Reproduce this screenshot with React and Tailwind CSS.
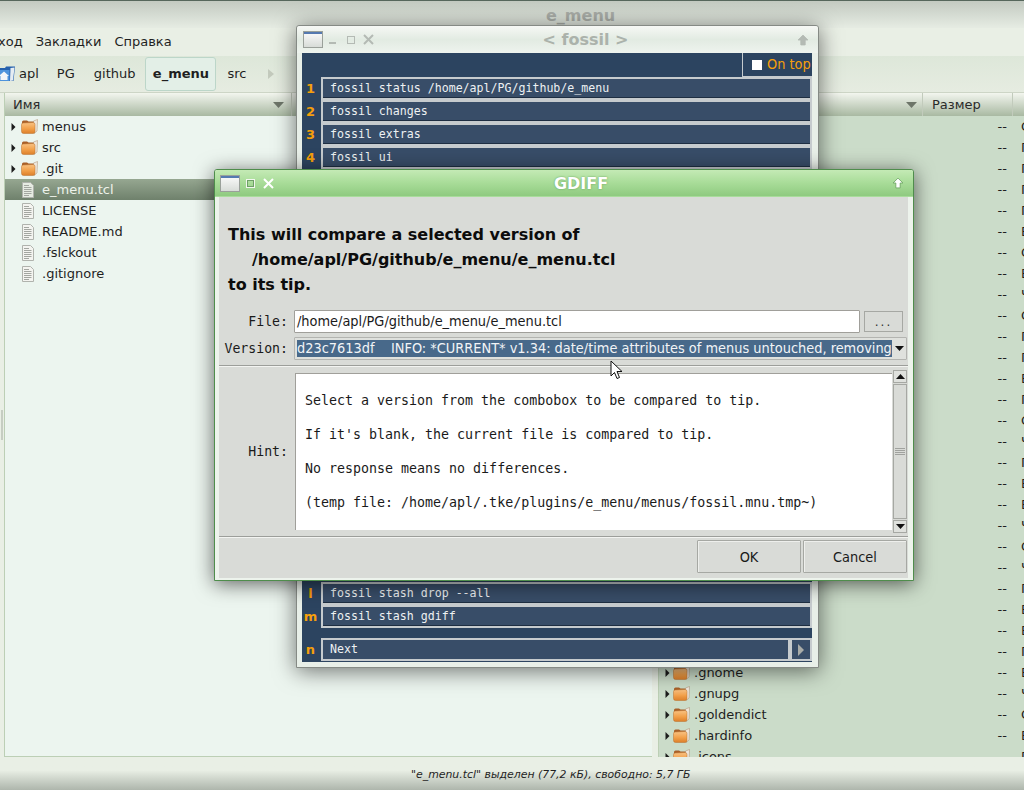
import React from 'react'

const leftRows = [
  { name: 'menus', dir: true },
  { name: 'src', dir: true },
  { name: '.git', dir: true },
  { name: 'e_menu.tcl', selected: true },
  { name: 'LICENSE' },
  { name: 'README.md' },
  { name: '.fslckout' },
  { name: '.gitignore' },
]

const dayLetters = 'СППППВСВЧСППВПСЧПВВЧСЧПВВПВЧСВП'.split('')
const rightNames = { 26: '.gnome', 27: '.gnupg', 28: '.goldendict', 29: '.hardinfo', 30: '.icons' }

function FolderIcon() {
  return (
    <svg width="17" height="15" viewBox="0 0 17 15" className="shrink-0">
      <defs>
        <linearGradient id="folderFront" x1="0" y1="0" x2="0" y2="1">
          <stop offset="0" stopColor="#f9c384" />
          <stop offset="0.55" stopColor="#f2a04a" />
          <stop offset="1" stopColor="#dc7f2a" />
        </linearGradient>
      </defs>
      <path d="M1 3 Q1 1.5 2.5 1.5 L6 1.5 L7.5 2.5 L14 2.5 L14 12 L1 12 Z" fill="#a85f28" />
      <path d="M12.5 2 L16.5 0.5 L16 12 L13 14.5 Z" fill="#efe9df" stroke="#a8896a" strokeWidth="0.5" />
      <path d="M0.5 5.5 Q0.5 4 2 4 L12 3.5 Q14 3.5 14 5.5 L14 12.5 Q14 14.5 12 14.5 L2.5 14.5 Q0.5 14.5 0.5 12.5 Z" fill="url(#folderFront)" stroke="#b8712f" strokeWidth="0.5" />
    </svg>
  )
}

function FileIcon({ selected }) {
  return (
    <svg width="14" height="16" viewBox="0 0 14 16" className="shrink-0">
      <path d="M1.5 0.5 H9.5 L12.5 3.5 V15.5 H1.5 Z" fill={selected ? '#e6ebe2' : '#f4f4f0'} stroke="#b0b3ad" />
      <path d="M3 3.5 H8 M3 5.5 H10.5 M3 7.5 H10.5 M3 9.5 H10.5 M3 11.5 H10.5 M3 13.5 H8" stroke="#a3a6a0" strokeWidth="1" />
    </svg>
  )
}

function Expander() {
  return (
    <svg width="5" height="8" viewBox="0 0 5 8" className="shrink-0">
      <path d="M0.5 0 L4.5 4 L0.5 8 Z" fill="#1c1c1c" />
    </svg>
  )
}

function SortArrow() {
  return (
    <svg width="11" height="6" viewBox="0 0 11 6">
      <path d="M0 0 H11 L5.5 6 Z" fill="#6d7569" />
    </svg>
  )
}

function WindowIcon() {
  return (
    <div className="w-[20px] h-[17px] border border-[#9aa09a] bg-gradient-to-b from-[#fbfbfb] to-[#d8dcd8] shrink-0">
      <div className="h-[2px] bg-[#5579b0]" />
    </div>
  )
}

function ArrowUp({ color, stroke }) {
  return (
    <svg width="12" height="12" viewBox="0 0 11 11">
      <path d="M5.5 1 L10 5.5 H7.5 V10 H3.5 V5.5 H1 Z" fill={color} stroke={stroke} strokeWidth="0.8" />
    </svg>
  )
}

function FossilRow({ label, text }) {
  return (
    <div className="flex h-[23px]">
      <div className="w-[19px] pr-[2px] flex items-center justify-center font-bold text-[13px] text-[#f59f0b]">{label}</div>
      <div className="flex-1 flex items-center pl-[7px] pt-[1px] border-2 border-[#c6cbce] bg-[#384d68] text-[#eef1f3] shadow-[inset_0_-1px_0_#1e2e42] font-['DejaVu_Sans_Mono',monospace] text-[11.6px]">
        {text}
      </div>
    </div>
  )
}

function FossilWindow() {
  return (
    <div className="absolute left-[296px] top-[25px] w-[523px] h-[643px] flex flex-col border border-[#858a85] rounded-t-[3px] bg-[#e8efe8] shadow-[0_3px_22px_rgba(0,0,0,0.55)]">
      <div className="h-[27px] shrink-0 flex items-center pl-[6px] pr-[9px] relative rounded-t-[3px] bg-gradient-to-b from-[#f6f8f5] via-[#e2ebe2] to-[#eef3ee]">
        <WindowIcon />
        <div className="ml-[6px] w-[7px] h-[2px] mt-[6px] bg-[#b4bab4]" />
        <div className="ml-[11px] w-[8px] h-[8px] border border-[#b4bab4]" />
        <svg width="11" height="11" viewBox="0 0 11 11" className="ml-[8px]">
          <path d="M1 1 L10 10 M10 1 L1 10" stroke="#b4bab4" strokeWidth="2" />
        </svg>
        <div className="flex-1 text-center font-bold text-[16px] text-[#abb2ab]">&lt; fossil &gt;</div>
        <ArrowUp color="#b4bab4" stroke="#b4bab4" />
      </div>
      <div className="flex-1 ml-[5px] mr-[6px] mb-[5px] flex flex-col bg-[#2c4460]">
        <div className="h-[24px] flex justify-end">
          <div className="w-[70px] flex items-center pl-[9px] gap-[5px] border-l border-b border-[#c6cbce] font-['DejaVu_Sans_Condensed','DejaVu_Sans',sans-serif] text-[14.4px] text-[#f59f0b]">
            <div className="w-[10px] h-[10px] bg-white shrink-0" />
            <span className="whitespace-nowrap">On top</span>
          </div>
        </div>
        <FossilRow label="1" text="fossil status /home/apl/PG/github/e_menu" />
        <FossilRow label="2" text="fossil changes" />
        <FossilRow label="3" text="fossil extras" />
        <FossilRow label="4" text="fossil ui" />
        <div className="flex-1" />
        <FossilRow label="l" text="fossil stash drop --all" />
        <FossilRow label="m" text="fossil stash gdiff" />
        <div className="h-[10px]" />
        <div className="flex h-[23px] mb-[1px]">
          <div className="w-[19px] pr-[2px] flex items-center justify-center font-bold text-[13px] text-[#f59f0b]">n</div>
          <div className="flex-1 flex items-center pl-[7px] pt-[1px] border-2 border-[#c6cbce] bg-[#384d68] text-[#eef1f3] font-['DejaVu_Sans_Mono',monospace] text-[11.6px]">
            Next
          </div>
          <div className="w-[22px] flex items-center justify-center border-2 border-[#c6cbce] bg-[#384d68]">
            <svg width="6" height="12" viewBox="0 0 6 12">
              <path d="M0 0 L6 6 L0 12 Z" fill="#a9aca8" />
            </svg>
          </div>
        </div>
      </div>
    </div>
  )
}

function Separator() {
  return <div className="h-[2px] shrink-0 border-t border-[#9c9e9a] bg-[#f3f4f1]" />
}

function DialogButton({ children }) {
  return (
    <div className="w-[104px] h-[33px] flex items-center justify-center pt-[2px] border border-[#a6a8a3] rounded-[1px] bg-[#d9dbd7] shadow-[inset_1px_1px_0_#eeefec] font-['DejaVu_Sans_Condensed','DejaVu_Sans',sans-serif] text-[14.4px] text-[#1a1a1a]">
      {children}
    </div>
  )
}

function Scrollbar() {
  return (
    <div className="w-[14px] h-[163px] flex flex-col gap-[1px] mt-[3px] shrink-0">
      <div className="h-[13px] flex items-center justify-center border border-[#a6a8a3] bg-[#dfe1dd]">
        <svg width="9" height="5" viewBox="0 0 9 5"><path d="M4.5 0 L9 5 H0 Z" fill="#111" /></svg>
      </div>
      <div className="flex-1 flex flex-col items-center justify-center gap-[1px] border border-[#a6a8a3] bg-[#d9dbd7]">
        <div className="w-[10px] h-[1px] bg-[#a0a29e]" />
        <div className="w-[10px] h-[1px] bg-[#a0a29e]" />
        <div className="w-[10px] h-[1px] bg-[#a0a29e]" />
        <div className="w-[10px] h-[1px] bg-[#a0a29e]" />
      </div>
      <div className="h-[13px] flex items-center justify-center border border-[#a6a8a3] bg-[#dfe1dd]">
        <svg width="9" height="5" viewBox="0 0 9 5"><path d="M0 0 H9 L4.5 5 Z" fill="#111" /></svg>
      </div>
    </div>
  )
}

function GdiffDialog() {
  const mono = "font-['DejaVu_Sans_Mono',monospace] text-[13.2px] text-[#1a1a1a]"
  const condensed = "font-['DejaVu_Sans_Condensed','DejaVu_Sans',sans-serif] text-[14.4px]"
  return (
    <div className="absolute left-[214px] top-[169px] w-[700px] h-[412px] flex flex-col border border-[#4f8d4c] rounded-t-[3px] bg-[#edf3ec] shadow-[0_3px_20px_rgba(0,0,0,0.6)]">
      <div className="h-[27px] shrink-0 flex items-center pl-[5px] pr-[9px] rounded-t-[2px] border-b border-[#a9dc9c] bg-gradient-to-b from-[#c4eab5] via-[#a8dc98] to-[#8fca80]">
        <WindowIcon />
        <div className="ml-[6px] w-[9px] h-[9px] border border-[#f2f7ef] shadow-[inset_0_0_0_1px_#6f9f68]" />
        <svg width="11" height="11" viewBox="0 0 11 11" className="ml-[8px]">
          <path d="M1 1 L10 10 M10 1 L1 10" stroke="#ffffff" strokeWidth="2" />
        </svg>
        <div className="flex-1 text-center pt-[1px] font-bold text-[16px] text-white [text-shadow:0_0_2px_#5e9c55] pr-[4px]">GDIFF</div>
        <ArrowUp color="#ffffff" stroke="#6ea564" />
      </div>
      <div className="flex-1 ml-[4px] mr-[5px] mb-[2px] flex flex-col bg-[#d9dbd7]">
        <div className="pt-[25px] pl-[9px] font-bold text-[16px] leading-[25px] text-[#0c0c0c]">
          <div>This will compare a selected version of</div>
          <div className="pl-[24px]">/home/apl/PG/github/e_menu/e_menu.tcl</div>
          <div>to its tip.</div>
        </div>
        <div className="mt-[13px] flex items-center h-[23px]">
          <div className={`w-[69px] text-right ${mono}`}>File:</div>
          <div className={`ml-[6px] w-[566px] h-full flex items-center pl-[2px] border border-[#a09f9a] rounded-[1px] bg-white text-[#1a1a1a] ${condensed}`}>
            /home/apl/PG/github/e_menu/e_menu.tcl
          </div>
          <div className="ml-[4px] w-[39px] h-[21px] flex items-center justify-center border border-[#a6a8a3] bg-[#d9dbd7] text-[12px] tracking-[2px] text-[#333]">...</div>
        </div>
        <div className="mt-[4px] flex items-center h-[23px]">
          <div className={`w-[69px] text-right ${mono}`}>Version:</div>
          <div className="ml-[6px] w-[613px] h-full flex items-center pl-[2px] border border-[#b3b4b0] rounded-[1px] bg-[#dfe1dd]">
            <div className={`w-[595px] h-[17px] overflow-hidden whitespace-pre bg-[#48698a] leading-[17px] text-[#f2f4f6] ${condensed}`}>
              d23c7613df    INFO: *CURRENT* v1.34: date/time attributes of menus untouched, removing
            </div>
            <div className="flex-1 flex justify-center">
              <svg width="9" height="5" viewBox="0 0 9 5"><path d="M0 0 H9 L4.5 5 Z" fill="#111" /></svg>
            </div>
          </div>
        </div>
        <div className="mt-[5px]"><Separator /></div>
        <div className="h-[169px] flex">
          <div className={`w-[69px] self-center text-right ${mono}`}>Hint:</div>
          <div className="ml-[7px] mt-[6px] w-[597px] h-[157px] border-l border-t border-[#a09f9a] bg-white pl-[9px] pt-[10px] font-['DejaVu_Sans_Mono',monospace] text-[13.3px] leading-[34px] text-[#1a1a1a]">
            <div>Select a version from the combobox to be compared to tip.</div>
            <div>If it's blank, the current file is compared to tip.</div>
            <div>No response means no differences.</div>
            <div>(temp file: /home/apl/.tke/plugins/e_menu/menus/fossil.mnu.tmp~)</div>
          </div>
          <div className="ml-[1px]"><Scrollbar /></div>
        </div>
        <Separator />
        <div className="flex-1 flex justify-end items-start gap-[2px] pt-[2px] pr-[1px]">
          <DialogButton>OK</DialogButton>
          <DialogButton>Cancel</DialogButton>
        </div>
      </div>
    </div>
  )
}

function HomeIcon() {
  return (
    <svg width="18" height="18" viewBox="0 0 18 18" className="shrink-0">
      <path d="M0 3 L7 3 L8 1.5 L17 1.5 L15.5 16 L0 16 Z" fill="#2561ad" />
      <path d="M12.5 3 L16.5 2.5 L15 15.5 L12 16 Z" fill="#e6ecf2" />
      <path d="M0 5 L11.5 5 L11.5 16 L0 16 Z" fill="#4d93dc" />
      <path d="M1 11 L6 6.5 L11 11 L9.5 11 L9.5 15 L2.5 15 L2.5 11 Z" fill="#f2f5f8" />
    </svg>
  )
}

function PathBar() {
  return (
    <div className="h-[37px] shrink-0 flex items-center text-[13px] text-[#1f1f1f] border-b border-[#cdd5c6] bg-gradient-to-b from-[#dde7d9] to-[#e6ece1]">
      <div className="-ml-[2px]"><HomeIcon /></div>
      <span className="ml-[3px]">apl</span>
      <span className="ml-[18px]">PG</span>
      <span className="ml-[19px]">github</span>
      <div className="ml-[10px] w-[71px] h-[34px] flex items-center justify-center font-bold border border-[#bcd6c9] rounded-[3px] bg-[#e3efe7]">e_menu</div>
      <span className="ml-[11px]">src</span>
      <svg width="6" height="10" viewBox="0 0 6 10" className="ml-[22px]">
        <path d="M0 0 L6 5 L0 10 Z" fill="#c3cabd" />
      </svg>
    </div>
  )
}

function HeaderCell({ className, children }) {
  return (
    <div className={`h-full flex items-center border-r border-[#c2cbbc] ${className}`}>{children}</div>
  )
}

function LeftPane() {
  return (
    <div className="w-[648px] flex flex-col border-l border-b border-[#bccfb5] bg-[#ecf5ef] overflow-hidden">
      <div className="h-[23px] shrink-0 flex text-[13px] text-[#2a2a2a] bg-gradient-to-b from-[#f3f6ef] to-[#a9b9a2]">
        <HeaderCell className="w-[287px] pl-[8px] pr-[7px] justify-between">
          <span>Имя</span>
          <SortArrow />
        </HeaderCell>
      </div>
      {leftRows.map((row) => (
        <div
          key={row.name}
          className={`h-[21px] shrink-0 flex items-center text-[13px] ${row.selected ? 'bg-gradient-to-b from-[#96a791] to-[#6f816c] text-[#eef2ea]' : 'text-[#1f1f1f]'}`}
        >
          <div className="w-[16px] shrink-0 pl-[6px] flex">{row.dir && <Expander />}</div>
          <div className="w-[21px] shrink-0 flex">{row.dir ? <FolderIcon /> : <FileIcon selected={row.selected} />}</div>
          <span>{row.name}</span>
        </div>
      ))}
    </div>
  )
}

function RightPane() {
  return (
    <div className="flex-1 flex flex-col bg-[#cbdcc9] overflow-hidden border-l border-[#bccfb5]">
      <div className="h-[23px] shrink-0 flex text-[13px] text-[#2a2a2a] bg-gradient-to-b from-[#f3f6ef] to-[#a9b9a2]">
        <HeaderCell className="w-[264px] pr-[5px] justify-end"><SortArrow /></HeaderCell>
        <HeaderCell className="w-[90px] pl-[9px]">Размер</HeaderCell>
      </div>
      {dayLetters.map((day, i) => (
        <div key={i} className="h-[21px] shrink-0 flex items-center text-[13px] text-[#1f1f1f]">
          <div className="w-[14px] shrink-0 pl-[6px] flex">{rightNames[i] && <Expander />}</div>
          <div className="w-[21px] shrink-0 flex">{rightNames[i] && <FolderIcon />}</div>
          <span>{rightNames[i]}</span>
          <span className="ml-auto mr-[14px]">--</span>
          <span className="w-[3px] overflow-hidden">{day}</span>
        </div>
      ))}
    </div>
  )
}

export default function App() {
  return (
    <div className="relative w-[1024px] h-[790px] overflow-hidden flex flex-col bg-[#e9efe5] font-['DejaVu_Sans',sans-serif]">
      <div className="h-[28px] shrink-0 flex items-center pt-[3px] border-t border-[#56675c] bg-gradient-to-b from-[#c3cac1] to-[#e6ece3]">
        <span className="ml-[546px] font-bold text-[16px] text-[#a8aca6]">e_menu</span>
      </div>
      <div className="h-[28px] shrink-0 flex items-center -ml-[36px] gap-[13px] text-[13px] text-[#1f1f1f]">
        <span>Переход</span>
        <span>Закладки</span>
        <span>Справка</span>
      </div>
      <PathBar />
      <div className="flex-1 min-h-0 flex pl-[4px]">
        <LeftPane />
        <div className="w-[6px] shrink-0" />
        <RightPane />
      </div>
      <div className="h-[33px] shrink-0 flex items-start bg-gradient-to-b from-[#e9efe5] from-[40%] to-[#aeb6ac]">
        <span className="ml-[411px] mt-[10px] text-[10.9px] italic text-[#1f1f1f] whitespace-nowrap">"e_menu.tcl" выделен (77,2 кБ), свободно: 5,7 ГБ</span>
      </div>
      <div className="absolute left-[1px] top-[410px] w-[2px] h-[30px] bg-[#c6cdc2]" />
      <FossilWindow />
      <GdiffDialog />
      <svg width="14" height="21" viewBox="0 0 14 21" className="absolute left-[610px] top-[360px]">
        <path d="M1 1 L1 16 L4.5 12.5 L7 18.5 L9.5 17.5 L7 11.5 L12 11.5 Z" fill="#ffffff" stroke="#111111" strokeWidth="1" />
      </svg>
    </div>
  )
}
